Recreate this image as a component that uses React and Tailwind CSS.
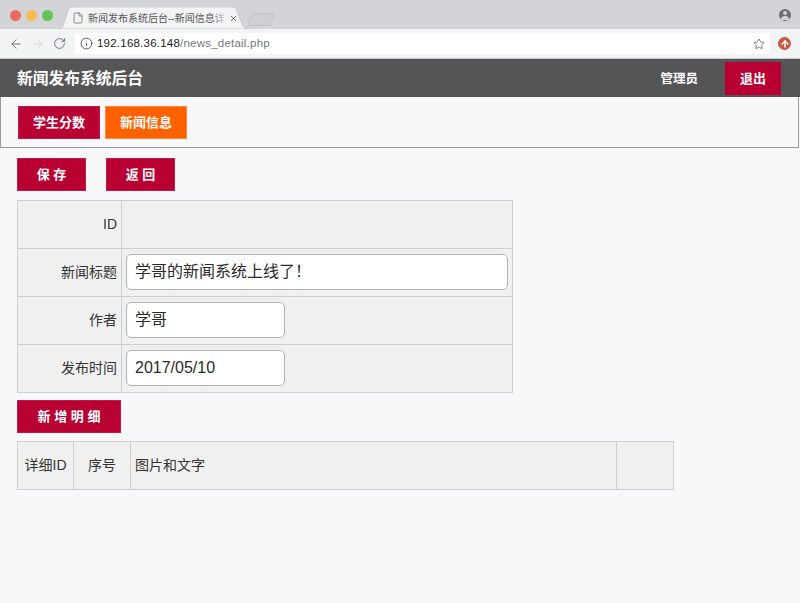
import React from 'react';
import { ArrowLeft, ArrowRight, RotateCw, Info, Star, File, X, ArrowUp } from 'lucide-react';

const font = { sans: "font-['Liberation_Sans','Noto_Sans_CJK_SC',sans-serif]" };

const RedButton = ({ children, className = '' }) => (
    <button className={`h-[33px] bg-[#b80033] border border-[#c41a4a] text-white text-[13px] font-bold ${className}`}>
        {children}
    </button>
);

const ChromeBar = () => (
    <div>
        <div className="h-[29px] bg-[#d3d4d8] flex items-start relative">
            <div className="flex gap-[5px] pl-[10px] pt-[10px]">
                <span className="w-[11px] h-[11px] rounded-full bg-[#ee6a5f]" />
                <span className="w-[11px] h-[11px] rounded-full bg-[#f5bd4f]" />
                <span className="w-[11px] h-[11px] rounded-full bg-[#61c454]" />
            </div>
            <div className="ml-[5px] mt-[7px] relative w-[192px] h-[22px]">
                <svg width="192" height="22" className="absolute inset-0">
                    <path d="M0 22 C4 22 5 19 6 16 L10 4 C11 1 12 0 15 0 L174 0 C177 0 178 1 179 4 L184 17 C185 20 187 22 191 22 Z" fill="#f2f3f5" stroke="#bfc0c4" strokeWidth="0.7" />
                </svg>
                <div className="relative flex items-center h-full pl-[14px]">
                    <File size={12} strokeWidth={1.3} className="text-[#555] shrink-0" />
                    <div className="ml-[4px] w-[139px] relative pt-[1px]">
                        <span className="block text-[10px] text-[#555] whitespace-nowrap">新闻发布系统后台--新闻信息详</span>
                        <span className="absolute right-0 top-0 h-full w-[14px] bg-gradient-to-r from-transparent to-[#f2f3f5]" />
                    </div>
                    <X size={9} strokeWidth={2} className="ml-[2px] text-[#444] shrink-0" />
                </div>
            </div>
            <div className="-ml-[1px] mt-[13px] w-[24px] h-[13px] bg-[#cfd0d3] border border-[#c4c5c8] rounded-[3px] -skew-x-[15deg]" />
            <div className="ml-auto mr-[9px] mt-[9px] w-[12px] h-[12px] rounded-full bg-[#6d6e72] flex flex-col items-center overflow-hidden">
                <span className="mt-[2px] w-[4px] h-[4px] rounded-full bg-[#d3d4d8]" />
                <span className="mt-[1px] w-[8px] h-[4px] rounded-t-full bg-[#d3d4d8]" />
            </div>
        </div>
        <div className="h-[30px] bg-[#f2f3f5] border-b border-[#c9cace] flex items-center">
            <ArrowLeft size={14} strokeWidth={1.5} className="ml-[9px] text-[#5f6368]" />
            <ArrowRight size={14} strokeWidth={1.5} className="ml-[8px] text-[#d3d4d8]" />
            <RotateCw size={13} strokeWidth={1.6} className="ml-[8px] text-[#5f6368]" />
            <div className="ml-[9px] w-[695px] h-[21px] bg-white rounded-[2px] flex items-center pl-[5px] pr-[5px]">
                <Info size={13} strokeWidth={1.6} className="text-[#444]" />
                <span className="ml-[4px] text-[11.5px] tracking-[0.22px] text-[#222]">192.168.36.148<span className="text-[#777]">/news_detail.php</span></span>
                <Star size={12} strokeWidth={1.5} className="ml-auto text-[#555]" />
            </div>
            <div className="ml-[8px] w-[13px] h-[13px] rounded-full bg-[#c25a44] flex items-center justify-center">
                <ArrowUp size={10} strokeWidth={3.5} className="text-white" />
            </div>
        </div>
    </div>
);

const labelCell = 'border border-[#cfcfcf] bg-[#f0f0f0] text-[14px] text-[#333] font-normal';

const TextInput = ({ value, className = '' }) => (
    <div className={`h-[36px] bg-white border border-[#b3b3b3] rounded-[5px] flex items-center pl-[8px] text-[16px] text-[#2a2a2a] ${className}`}>
        {value}
    </div>
);

const App = () => {
    const rows = [
        { label: 'ID', input: null },
        { label: '新闻标题', input: <TextInput value="学哥的新闻系统上线了！" className="w-[382px]" /> },
        { label: '作者', input: <TextInput value="学哥" className="w-[159px]" /> },
        { label: '发布时间', input: <TextInput value="2017/05/10" className="w-[159px]" /> },
    ];

    return (
        <div className={`w-[800px] h-[603px] overflow-hidden bg-[#f8f7f9] ${font.sans}`}>
            <ChromeBar />
            <header className="h-[38px] bg-[#555557] flex items-center pl-[17px] pr-[19px]">
                <h1 className="text-[15.75px] font-bold text-white pt-[1px]">新闻发布系统后台</h1>
                <span className="ml-auto text-[12.5px] font-bold text-white pt-[3px]">管理员</span>
                <button className="ml-[27px] w-[56px] h-[33px] bg-[#b80033] text-white text-[13px] font-bold pt-[1px]">退出</button>
            </header>
            <nav className="h-[51px] mr-[1px] border-b border-l border-r border-[#9a9a9c] flex items-start gap-[5px] pl-[17px] pt-[9px]">
                <RedButton className="w-[82px]">学生分数</RedButton>
                <button className="w-[82px] h-[33px] bg-[#ff6000] border border-[#ff8a3c] text-white text-[13px] font-bold">新闻信息</button>
            </nav>
            <div className="pl-[17px] pt-[10px]">
                <div className="flex gap-[20px]">
                    <RedButton className="w-[69px]">保 存</RedButton>
                    <RedButton className="w-[69px]">返 回</RedButton>
                </div>
                <table className="mt-[9px] w-[496px] border-collapse table-fixed">
                    <tbody>
                        {rows.map((row) => (
                            <tr key={row.label} className="h-[48px]">
                                <td className={`${labelCell} w-[104px] text-right pr-[4px]`}>{row.label}</td>
                                <td className={`${labelCell} pl-[4px] pb-[1px]`}>{row.input}</td>
                            </tr>
                        ))}
                    </tbody>
                </table>
                <RedButton className="mt-[7px] w-[104px]">新 增 明 细</RedButton>
                <table className="mt-[8px] w-[657px] border-collapse table-fixed">
                    <tbody>
                        <tr className="h-[48px]">
                            <td className={`${labelCell} w-[56px] text-center`}>详细ID</td>
                            <td className={`${labelCell} w-[57px] text-center`}>序号</td>
                            <td className={`${labelCell} pl-[4px]`}>图片和文字</td>
                            <td className={`${labelCell} w-[57px]`}></td>
                        </tr>
                    </tbody>
                </table>
            </div>
        </div>
    );
};

export default App;
